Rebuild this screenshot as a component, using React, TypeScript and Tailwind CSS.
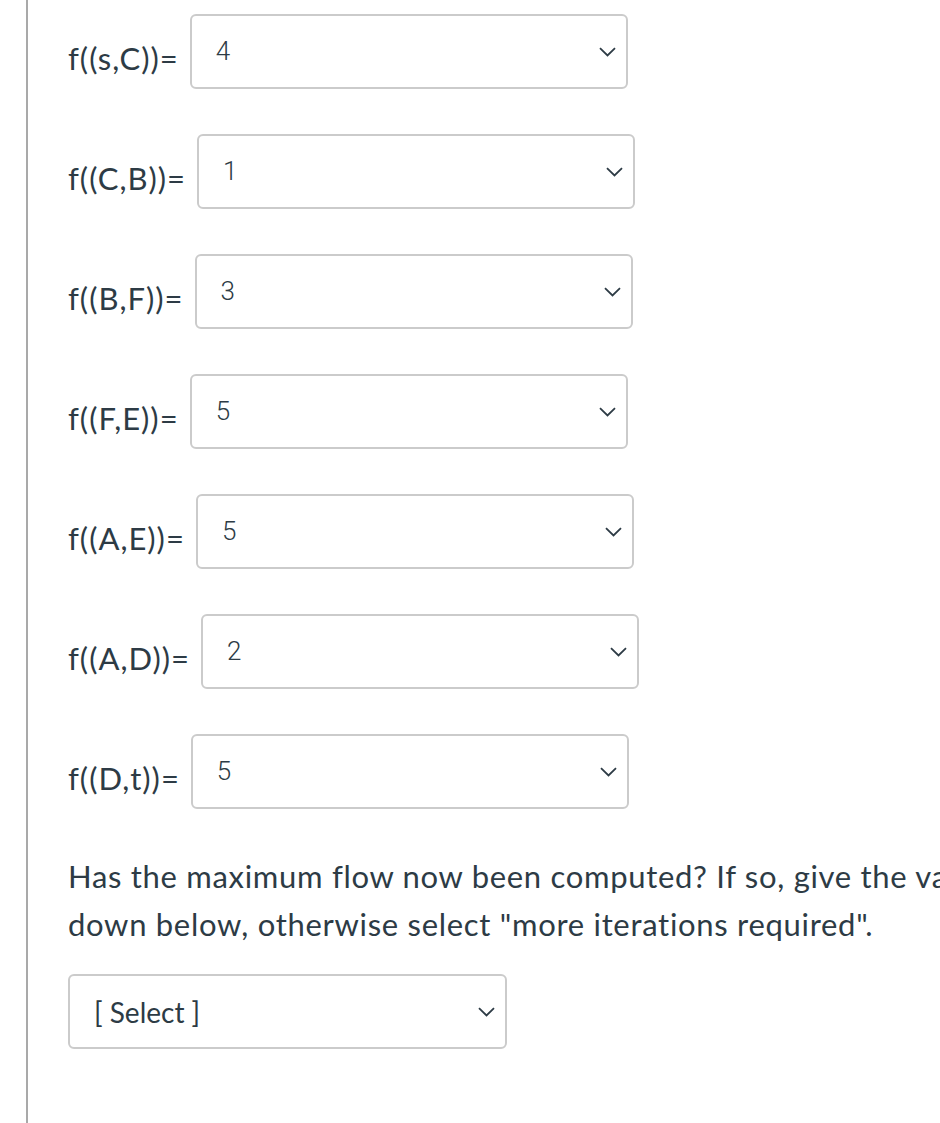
import React from "react";

const rows = [
  { label: "f((s,C))=", value: "4" },
  { label: "f((C,B))=", value: "1" },
  { label: "f((B,F))=", value: "3" },
  { label: "f((F,E))=", value: "5" },
  { label: "f((A,E))=", value: "5" },
  { label: "f((A,D))=", value: "2" },
  { label: "f((D,t))=", value: "5" },
];

const Chevron = () => (
  <svg width="17" height="10" viewBox="0 0 17 10" fill="none" className="shrink-0">
    <path d="M1 1.2 L8.5 8.5 L16 1.2" stroke="#2d3b45" strokeWidth="1.8" />
  </svg>
);

const SelectBox: React.FC<{ value: string; wide?: boolean }> = ({ value, wide }) => (
  <div
    className={`flex h-[75px] items-center justify-between rounded-[6px] border-2 border-[#cbcbcb] bg-white pl-[24px] pr-[10px] ${
      wide ? "w-[439px]" : "w-[438px]"
    }`}
  >
    {wide ? (
      <span className="font-['Lato',sans-serif] text-[28px] text-[#2d3b45]">{value}</span>
    ) : (
      <span className="font-['Roboto',sans-serif] text-[26px] font-light text-[#2d3b45]">{value}</span>
    )}
    <Chevron />
  </div>
);

export default function App() {
  return (
    <div className="h-[1123px] w-[940px] overflow-hidden bg-white font-['Lato',sans-serif] text-[#2d3b45]">
      <div className="ml-[26px] h-full border-l-2 border-[#a9a9a9] pl-[40px] pt-[14px]">
        <div className="flex flex-col gap-[45px]">
          {rows.map((r) => (
            <div key={r.label} className="flex items-start gap-[11px]">
              <span className="pt-[29px] text-[31px] leading-none tracking-[1px] whitespace-nowrap">{r.label}</span>
              <SelectBox value={r.value} />
            </div>
          ))}
        </div>
        <p className="mt-[43px] whitespace-nowrap text-[31px] leading-[48px] tracking-[0.7px]">
          Has the maximum flow now been computed? If so, give the value
          <br />
          down below, otherwise select "more iterations required".
        </p>
        <div className="mt-[26px]">
          <SelectBox value="[ Select ]" wide />
        </div>
      </div>
    </div>
  );
}
